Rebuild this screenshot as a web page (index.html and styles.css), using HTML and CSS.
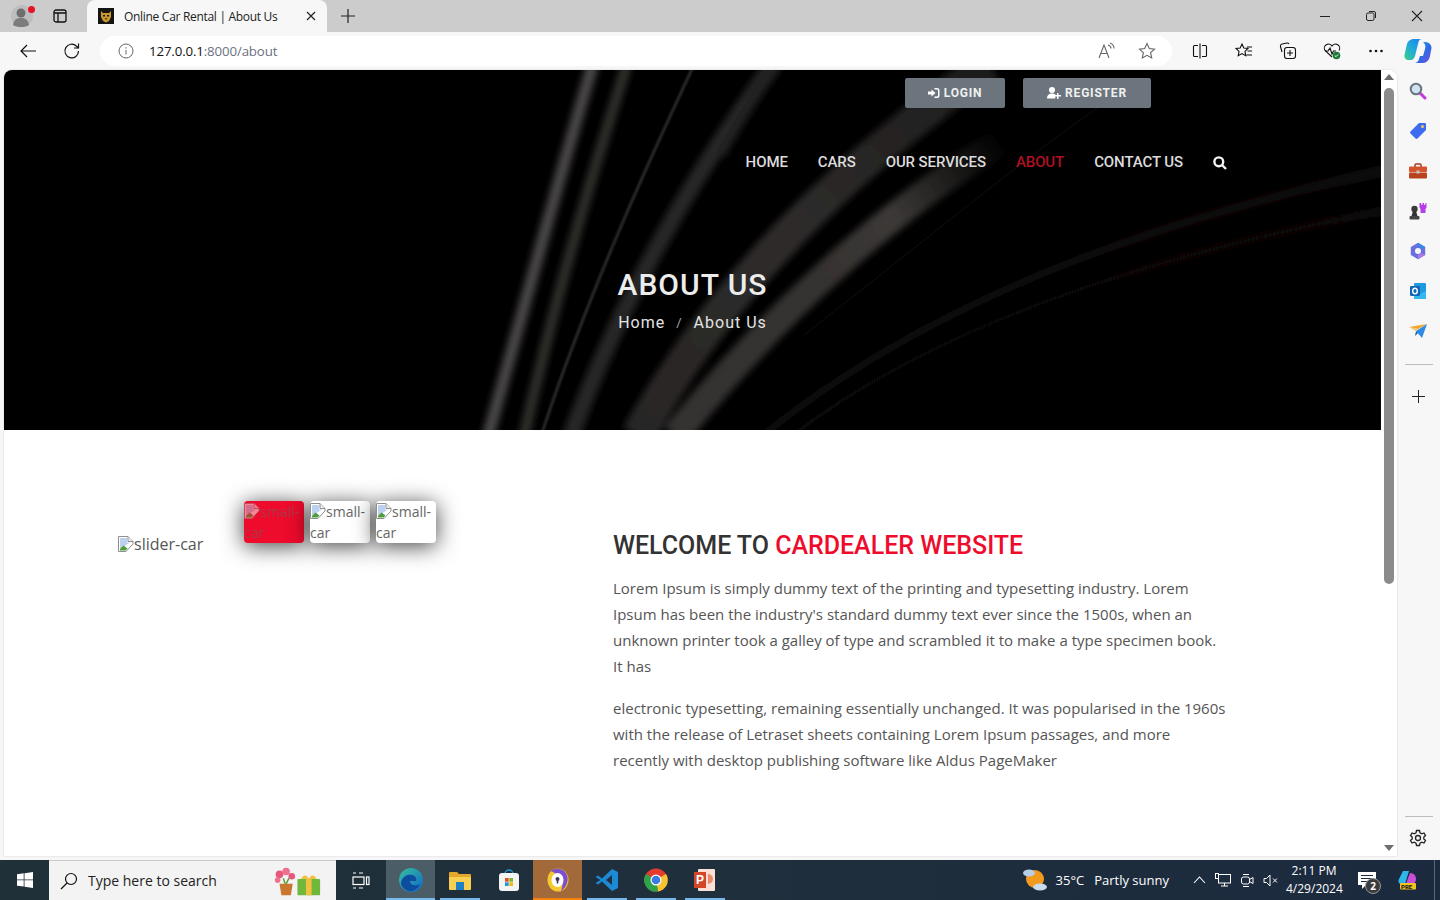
FILE: index.html
```html
<!DOCTYPE html>
<html lang="en">
<head>
<meta charset="utf-8">
<title>Online Car Rental | About Us</title>
<link rel="stylesheet" href="styles.css">
</head>
<body>
<div class="tabstrip">
  <div class="avatar">
    <svg width="24" height="24" viewBox="0 0 24 24"><circle cx="12" cy="12" r="11" fill="#bdbdbd"/><circle cx="11" cy="9" r="4.5" fill="#6e6e6e"/><path d="M3 21c1-6 4-7 8-7s7 1 8 7c-2 1.500-5 2-8 2s-6-.5-8-2z" fill="#7c7c7c"/></svg>
    <span class="dot"></span>
  </div>
  <div class="tabs-btn"><svg width="16" height="16" viewBox="0 0 16 16" fill="none" stroke="#111" stroke-width="1.300"><rect x="2" y="2" width="12" height="12" rx="2"/><path d="M6 5v9M2 5h12" /></svg></div>
  <div class="tab">
    <svg class="favicon" width="16" height="16" viewBox="0 0 16 16"><rect width="16" height="16" fill="#141414"/><path d="M3 3l2 2h6l2-2v6l-2 4-3 1.500L5 13 3 9z" fill="#c9982c"/><path d="M5 7h2v1.500H5zM9 7h2v1.500H9zM7 10h2l-1 2z" fill="#1a1a1a"/></svg>
    <span class="tab-title">Online Car Rental | About Us</span>
    <svg class="tab-close" width="10" height="10" viewBox="0 0 10 10" stroke="#222" stroke-width="1.200"><path d="M1 1l8 8M9 1l-8 8"/></svg>
  </div>
  <div class="newtab"><svg width="16" height="16" viewBox="0 0 16 16" stroke="#222" stroke-width="1.200"><path d="M8 1v14M1 8h14"/></svg></div>
  <div class="winctrls">
    <div class="winbtn"><svg width="12" height="12" viewBox="0 0 12 12" stroke="#222"><path d="M1 6.500h10"/></svg></div>
    <div class="winbtn"><svg width="12" height="12" viewBox="0 0 12 12" fill="none" stroke="#222"><rect x="1.500" y="3" width="7.500" height="7.500" rx="1.500"/><path d="M4 1.500h5A1.500 1.500 0 0 1 10.500 3v5"/></svg></div>
    <div class="winbtn"><svg width="12" height="12" viewBox="0 0 12 12" stroke="#222" stroke-width="1.100"><path d="M1 1l10 10M11 1L1 11"/></svg></div>
  </div>
</div>

<div class="toolbar">
  <div class="tbtn"><svg width="18" height="16" viewBox="0 0 18 16" fill="none" stroke="#111" stroke-width="1.200"><path d="M17 8H2M8 2L2 8l6 6"/></svg></div>
  <div class="tbtn"><svg width="18" height="18" viewBox="0 0 18 18" fill="none" stroke="#111" stroke-width="1.200"><path d="M15.500 9a6.800 6.800 0 1 1-2-4.800L15.500 6"/><path d="M15.500 1.500V6H11"/></svg></div>
  <div class="address">
    <svg class="info" width="16" height="16" viewBox="0 0 16 16" fill="none" stroke="#666"><circle cx="8" cy="8" r="7"/><path d="M8 7v4.500M8 4.200v1.400"/></svg>
    <span class="url"><span class="host">127.0.0.1</span>:8000/about</span>
    <svg class="read" width="18" height="18" viewBox="0 0 18 18" fill="none" stroke="#666" stroke-width="1.100"><path d="M1 16L6 3l5 13M3 11.500h6"/><path d="M10 3c2 .5 3 2 3 3.500M12 1c3 1 4 3 4 5.500"/></svg>
    <svg class="fav" width="18" height="18" viewBox="0 0 18 18" fill="none" stroke="#666" stroke-width="1.100"><path d="M9 1.500l2.300 5 5.200.6-3.900 3.600 1.100 5.300L9 13.300 4.300 16l1.100-5.300L1.500 7.100l5.200-.6z"/></svg>
  </div>
  <div class="tools">
    <div class="tbtn"><svg width="16" height="16" viewBox="0 0 16 16" fill="none" stroke="#111" stroke-width="1.100"><path d="M6 2.500H2.500a1 1 0 0 0-1 1v9a1 1 0 0 0 1 1H6M10 2.500h3.500a1 1 0 0 1 1 1v9a1 1 0 0 1-1 1H10M8 .5v15"/></svg></div>
    <div class="tbtn"><svg width="18" height="18" viewBox="0 0 18 18" fill="none" stroke="#111" stroke-width="1.100"><path d="M7 2l1.800 4 4.200.5-3 2.900.8 4.300L7 11.600l-3.800 2.100.8-4.300-3-2.900L5.200 6zM12 5h5M12.500 9h4.500M11.500 13h5.500"/></svg></div>
    <div class="tbtn"><svg width="18" height="18" viewBox="0 0 18 18" fill="none" stroke="#111" stroke-width="1.100"><path d="M3 10L1.500 4.500a2 2 0 0 1 1.500-2.500l5-1a2 2 0 0 1 2 1"/><rect x="5.500" y="5.500" width="11" height="11" rx="2.500"/><path d="M11 8v6M8 11h6"/></svg></div>
    <div class="tbtn"><svg width="18" height="18" viewBox="0 0 18 18"><path d="M9 15L2 8.500A4 4 0 0 1 9 4a4 4 0 0 1 7 4.500" fill="none" stroke="#111" stroke-width="1.100"/><path d="M2 9h3l2-3 2 6 1.500-3H13" fill="none" stroke="#111" stroke-width="1.100"/><circle cx="13.500" cy="13.500" r="3.800" fill="#1c7a35"/><path d="M11.800 13.500l1.200 1.200 2.200-2.200" fill="none" stroke="#fff"/></svg></div>
    <div class="tbtn"><svg width="16" height="4" viewBox="0 0 16 4" fill="#111"><circle cx="2.500" cy="2" r="1.300"/><circle cx="8" cy="2" r="1.300"/><circle cx="13.500" cy="2" r="1.300"/></svg></div>
    <div class="tbtn copilot"><svg width="28" height="26" viewBox="0 0 28 26"><defs><linearGradient id="cpa" x1="0" y1="1" x2="1" y2="0"><stop offset="0" stop-color="#35d08a"/><stop offset=".55" stop-color="#1fa5e0"/><stop offset="1" stop-color="#1f7fe8"/></linearGradient><linearGradient id="cpb" x1="0" y1="0" x2="1" y2="1"><stop offset="0" stop-color="#27b4ec"/><stop offset=".55" stop-color="#2b6be4"/><stop offset="1" stop-color="#7a4be0"/></linearGradient></defs><path d="M10 1h8c-2 0-3 1-3.500 3L11 18c-.6 2-2 4-4 4H5c-3 0-5-2-4.500-5l2-9C3.500 3 6 1 10 1z" fill="url(#cpa)"/><path d="M18 4h3c3 0 6.500 2 6.500 6l-1.500 8c-.7 4-3.500 7-7 7h-9c3 0 4.500-2 5-4l1-3h3l2-7c.5-2 1-4-2-7z" fill="url(#cpb)"/></svg></div>
  </div>
</div>

<div class="main">
  <div class="window">
    <div class="page">
      <section class="hero">
        <svg class="hero-art" viewBox="0 0 1377 360" preserveAspectRatio="none">
          <defs>
            <filter id="soft" x="-20%" y="-20%" width="140%" height="140%"><feGaussianBlur stdDeviation="3.500"/></filter>
            <filter id="softer" x="-20%" y="-20%" width="140%" height="140%"><feGaussianBlur stdDeviation="1"/></filter>
            <linearGradient id="fadeE" gradientUnits="userSpaceOnUse" x1="1000" y1="70" x2="800" y2="210"><stop offset="0" stop-color="#3c3837" stop-opacity="0"/><stop offset=".55" stop-color="#3c3837"/><stop offset="1" stop-color="#353130"/></linearGradient>
            <linearGradient id="fadeF" gradientUnits="userSpaceOnUse" x1="1377" y1="100" x2="760" y2="360"><stop offset="0" stop-color="#151212"/><stop offset=".6" stop-color="#100e0e"/><stop offset="1" stop-color="#0b0a0a"/></linearGradient>
            <linearGradient id="fadeD" gradientUnits="userSpaceOnUse" x1="979" y1="0" x2="636" y2="360"><stop offset="0" stop-color="#1e1c1c"/><stop offset=".5" stop-color="#2e2c2b"/><stop offset="1" stop-color="#282625"/></linearGradient>
          </defs>
          <g fill="none" filter="url(#soft)">
            <path d="M589 -6C560 90 525 220 484 366" stroke="#4a4746" stroke-width="12"/>
            <path d="M623 -6C596 80 555 210 520 366" stroke="#2f2d2c" stroke-width="11"/>
            <path d="M770 -6C700 90 620 220 567 366" stroke="#282625" stroke-width="17"/>
            <path d="M985 -6C880 70 730 190 634 366" stroke="url(#fadeD)" stroke-width="34"/>
            <path d="M1000 70C900 130 780 230 671 366" stroke="url(#fadeE)" stroke-width="28"/>
            <path d="M773 -6C745 35 730 60 716 85" stroke="#242322" stroke-width="10"/>
            <path d="M1383 100C1200 140 950 210 758 366" stroke="url(#fadeF)" stroke-width="7"/>
            <path d="M1383 140C1200 175 950 240 788 366" stroke="url(#fadeF)" stroke-width="5"/>
          </g>
          <path d="M689 -3C650 80 585 220 537 366" fill="none" stroke="#343130" stroke-width="2.500" filter="url(#softer)"/>
          <path d="M1133 13C1060 55 960 140 800 265" fill="none" stroke="#100f0f" stroke-width="1"/>
        </svg>
        <div class="auth">
          <a class="btn login"><svg width="12" height="12" viewBox="0 0 12 12" fill="#fff"><path d="M0 4.500h3.500V2.500L7.500 6l-4 3.500v-2H0z"/><path d="M6.500 1H9a2.500 2.500 0 0 1 2.500 2.500v5A2.500 2.500 0 0 1 9 11H6.500V9.500H9a1 1 0 0 0 1-1v-5a1 1 0 0 0-1-1H6.500z"/></svg>LOGIN</a>
          <a class="btn register"><svg width="14" height="12" viewBox="0 0 14 12" fill="#fff"><circle cx="5" cy="3" r="3"/><path d="M0 11.500C0 8 2 6.500 5 6.500c1.500 0 2.500.3 3.300 1v4H0z"/><path d="M10 6h1.500v2H14v1.500h-2.500V12H10V9.500H7.800V8H10z"/></svg>REGISTER</a>
        </div>
        <nav class="nav">
          <a class="nav-link">HOME</a>
          <a class="nav-link">CARS</a>
          <a class="nav-link">OUR SERVICES</a>
          <a class="nav-link active">ABOUT</a>
          <a class="nav-link">CONTACT US</a>
          <svg class="nav-search" width="14" height="14" viewBox="0 0 14 14" fill="none" stroke="#f4f4f4" stroke-width="2.400"><circle cx="5.800" cy="5.800" r="4.400"/><path d="M9 9l4 4"/></svg>
        </nav>
        <div class="hero-title">
          <h1>ABOUT US</h1>
          <p class="crumbs"><span>Home</span><span class="sep">/</span><span>About Us</span></p>
        </div>
      </section>

      <section class="about">
        <div class="gallery">
          <div class="thumbs">
            <div class="thumb selected">
              <span class="thumb-alt"><svg class="broken" width="16" height="16" viewBox="0 0 16 16"><use href="#brk"/></svg>small-car</span>
            </div>
            <div class="thumb">
              <span class="thumb-alt"><svg class="broken" width="16" height="16" viewBox="0 0 16 16"><use href="#brk"/></svg>small-car</span>
            </div>
            <div class="thumb">
              <span class="thumb-alt"><svg class="broken" width="16" height="16" viewBox="0 0 16 16"><use href="#brk"/></svg>small-car</span>
            </div>
          </div>
          <div class="slider-alt">
            <svg class="broken" width="16" height="16" viewBox="0 0 16 16"><g id="brk"><path d="M.5.500H10L15 5.500V8L8 15.500H.5z" fill="#fff" stroke="#8f8f8f"/><path d="M10 .5v5h5" fill="#ececec" stroke="#8f8f8f"/><path d="M2 2h7v4.500h3L6.500 10 2 13z" fill="#bcd0f2"/><path d="M2 14.500V13l3.500-3.500 4 3-2 2z" fill="#4f9c3a"/></g></svg>slider-car
          </div>
        </div>
        <div class="copy">
          <h2>WELCOME TO <span class="accent">CARDEALER WEBSITE</span></h2>
          <p>Lorem Ipsum is simply dummy text of the printing and typesetting industry. Lorem Ipsum has been the industry's standard dummy text ever since the 1500s, when an unknown printer took a galley of type and scrambled it to make a type specimen book. It has</p>
          <p>electronic typesetting, remaining essentially unchanged. It was popularised in the 1960s with the release of Letraset sheets containing Lorem Ipsum passages, and more recently with desktop publishing software like Aldus PageMaker</p>
        </div>
      </section>
    </div>
    <div class="scrollbar">
      <svg class="arrow" width="10" height="6" viewBox="0 0 10 6" fill="#6e6e6e"><path d="M5 0l5 6H0z"/></svg>
      <div class="thumbbar"></div>
      <div class="track"></div>
      <svg class="arrow" width="10" height="6" viewBox="0 0 10 6" fill="#6e6e6e"><path d="M5 6L0 0h10z"/></svg>
    </div>
  </div>

  <aside class="sidebar">
    <div class="side-ico"><svg width="18" height="18" viewBox="0 0 18 18"><path d="M11 11l5 5" stroke="#c23ae0" stroke-width="3" stroke-linecap="round"/><circle cx="7" cy="7" r="5.300" fill="#cfe2f2" stroke="#6a747c" stroke-width="2"/></svg></div>
    <div class="side-ico"><svg width="18" height="18" viewBox="0 0 18 18"><path d="M10 1h6a1 1 0 0 1 1 1v6L8.500 16.500a1.500 1.500 0 0 1-2 0L1.500 11.500a1.500 1.500 0 0 1 0-2z" fill="#3d6cf0"/><circle cx="13.500" cy="4.500" r="1.500" fill="#f2c94c"/></svg></div>
    <div class="side-ico"><svg width="18" height="16" viewBox="0 0 18 16"><path d="M6 4V2a1 1 0 0 1 1-1h4a1 1 0 0 1 1 1v2" fill="none" stroke="#a33a1d" stroke-width="1.500"/><rect y="3.500" width="18" height="5.500" rx="1" fill="#d3532c"/><rect y="9.500" width="18" height="6" rx="1" fill="#b8431f"/><rect x="7.500" y="7.500" width="3" height="3" fill="#c9c4c0"/></svg></div>
    <div class="side-ico"><svg width="18" height="18" viewBox="0 0 18 18"><path d="M10.500 1h1.700v1.800h1.400V1h1.400v1.800h1.400V1h1.100v4.500l-1 1.500V11h-5V7l-1-1.500z" fill="#b53ee8"/><circle cx="5.500" cy="7" r="3.200" fill="#3b3b3b"/><path d="M4 9h3l1.500 5h-6z" fill="#333"/><rect x=".5" y="14" width="10" height="3.500" rx="1" fill="#444"/></svg></div>
    <div class="side-ico"><svg width="18" height="18" viewBox="0 0 18 18"><path d="M9 .8l7.200 4.200v8L9 17.200 1.800 13V5z" fill="#6a6fe0"/><path d="M9 .8l7.200 4.200-3.500 2L9 5z" fill="#3a86e8"/><path d="M16.200 13L9 17.200V13l3.700-2z" fill="#b07ae0"/><circle cx="9" cy="9" r="3" fill="#f7f7f7"/></svg></div>
    <div class="side-ico"><svg width="18" height="18" viewBox="0 0 18 18"><rect x="5" y="1" width="12" height="16" rx="1" fill="#1f9ae0"/><path d="M5 9l6 3 6-3v8H5z" fill="#35b8f0"/><rect x="1" y="4" width="10" height="10" rx="1.200" fill="#0f65b8"/><ellipse cx="6" cy="9" rx="2.300" ry="2.800" fill="none" stroke="#fff" stroke-width="1.400"/></svg></div>
    <div class="side-ico"><svg width="18" height="14" viewBox="0 0 18 14"><path d="M0 3l18-3-9 5z" fill="#f2a62c"/><path d="M18 0L7 7l6 7z" fill="#2e8ae6"/><path d="M7 7l-1 5 3-3z" fill="#1c5fb0"/><path d="M0 3l7 4 2-2z" fill="#f7c65c"/></svg></div>
    <div class="side-rule"></div>
    <div class="side-ico plus"><svg width="13" height="13" viewBox="0 0 13 13" stroke="#222"><path d="M6.500 0v13M0 6.500h13"/></svg></div>
    <div class="side-fill"></div>
    <div class="side-rule"></div>
    <div class="side-ico gear"><svg width="18" height="18" viewBox="0 0 18 18" fill="none" stroke="#222" stroke-width="1.300"><circle cx="9" cy="9" r="2.500"/><path d="M7.500 1.500h3l.5 2.300 1.800 1 2.200-.8 1.500 2.600L14.800 8v2l1.700 1.400-1.500 2.600-2.200-.8-1.800 1-.5 2.300h-3L7 14.200l-1.800-1-2.200.8-1.500-2.600L3.200 10V8L1.500 6.600 3 4l2.200.8 1.800-1z"/></svg></div>
  </aside>
</div>

<footer class="taskbar">
  <div class="start"><svg width="16" height="16" viewBox="0 0 16 16" fill="#fff"><path d="M0 2.200L6.700 1.300v6.200H0zM7.500 1.200L16 0v7.500H7.500zM0 8.300h6.700v6.300L0 13.700zM7.500 8.300H16V16l-8.500-1.200z"/></svg></div>
  <div class="search">
    <svg width="18" height="18" viewBox="0 0 18 18" fill="none" stroke="#111" stroke-width="1.200"><circle cx="11" cy="7" r="5.500"/><path d="M7 11l-6 6"/></svg>
    <span class="search-text">Type here to search</span>
    <svg class="search-art" width="51" height="30" viewBox="0 0 54 30"><circle cx="9" cy="8" r="4" fill="#e8567c"/><circle cx="16" cy="5" r="4" fill="#f0708c"/><circle cx="22" cy="10" r="3.500" fill="#e8567c"/><circle cx="7" cy="14" r="3" fill="#f0708c"/><path d="M13 12l2 6M19 12l-3 6" stroke="#5a9a3a" stroke-width="1.500"/><path d="M9 18h14l-2 12H11z" fill="#c9772e"/><rect x="28" y="13" width="24" height="17" rx="1" fill="#6fb83c"/><rect x="37" y="13" width="6" height="17" fill="#f0c040"/><path d="M32 13c2-6 7-4 8 0 1-4 6-6 8 0z" fill="#f0c040"/></svg>
  </div>
  <div class="task taskview"><svg width="18" height="17" viewBox="0 0 18 17" fill="none" stroke="#fff" stroke-width="1.200"><path d="M1 1h3M7 1h4M1 16h3M7 16h4"/><rect x="1" y="5" width="11" height="7.500"/><rect x="14.500" y="5" width="2.500" height="7.500"/></svg></div>
  <div class="task lit"><svg width="26" height="26" viewBox="0 0 26 26"><defs><linearGradient id="edg" x1="0" y1="0" x2="1" y2="1"><stop offset="0" stop-color="#35c1a0"/><stop offset="1" stop-color="#1266c8"/></linearGradient></defs><circle cx="13" cy="13" r="12" fill="url(#edg)"/><path d="M3 16C4 9 10 7 14 8c4 1 5 4 4 6h-6c0 4 5 6 10 3-2 5-7 8-11 7-5-1-8-5-8-8z" fill="#0c4da0"/></svg></div>
  <div class="task on-blue"><svg width="24" height="21" viewBox="0 0 24 21"><path d="M1 3a1 1 0 0 1 1-1h7l2 2h11a1 1 0 0 1 1 1v3H1z" fill="#e3a72a"/><rect x="1" y="7" width="22" height="13" rx="1" fill="#f7cf52"/><rect x="8" y="12" width="8" height="8" fill="#1d7fc4"/></svg></div>
  <div class="task"><svg width="24" height="24" viewBox="0 0 24 24"><path d="M8 6a4 4 0 0 1 8 0" fill="none" stroke="#1d9bd8" stroke-width="1.500"/><rect x="2" y="5" width="20" height="18" rx="3" fill="#f4f4f4"/><rect x="8" y="10" width="3.700" height="3.700" fill="#e8502a"/><rect x="12.300" y="10" width="3.700" height="3.700" fill="#7fba2a"/><rect x="8" y="14.300" width="3.700" height="3.700" fill="#1d9bd8"/><rect x="12.300" y="14.300" width="3.700" height="3.700" fill="#f5b81c"/></svg></div>
  <div class="task orange"><svg width="22" height="24" viewBox="0 0 22 24"><ellipse cx="11" cy="12" rx="10.500" ry="11.500" fill="#f5c832"/><path d="M4 3c5-4 13-3 16 4 2 6-1 13-6 16 3-7 2-14-10-20z" fill="#7c4fd0"/><ellipse cx="10.500" cy="12" rx="6" ry="7" fill="#fff"/><circle cx="10.500" cy="11" r="2" fill="#3d3560"/><rect x="9.700" y="12" width="1.600" height="3.500" fill="#3d3560"/></svg></div>
  <div class="task on-blue"><svg width="24" height="24" viewBox="0 0 24 24"><path d="M17 1l6 3v16l-6 3L7 13.500l-4 3-2.500-1.500 5-3-5-3L3 7.500l4 3zM17 7l-6 5 6 5z" fill="#1d8ad6"/></svg></div>
  <div class="task on-blue"><svg width="24" height="24" viewBox="0 0 24 24"><circle cx="12" cy="12" r="11.500" fill="#e33b2e"/><path d="M12 12L22 6a11.500 11.500 0 0 1-8 17.500z" fill="#f6c433"/><path d="M12 12L14 23.500A11.500 11.500 0 0 1 2 6z" fill="#2fa24a"/><circle cx="12" cy="12" r="5.500" fill="#fff"/><circle cx="12" cy="12" r="4.300" fill="#3a7de0"/></svg></div>
  <div class="task on-blue"><svg width="22" height="24" viewBox="0 0 22 24"><rect x="4" y="1" width="17" height="22" rx="1" fill="#fbe0d6"/><rect width="12" height="16" y="4" fill="#d2472a"/><path d="M14 6a5 5 0 1 1 0 10z" fill="#f08a6a"/><text class="ppt-letter" x="2" y="16">P</text></svg></div>

  <div class="tray">
    <div class="weather">
      <svg width="26" height="24" viewBox="0 0 26 24"><circle cx="13" cy="11" r="9" fill="#f09a1e"/><ellipse cx="7" cy="5" rx="6" ry="3.500" fill="#b7cfe6"/><ellipse cx="18" cy="19" rx="7" ry="3.500" fill="#c9dcee"/></svg>
      <span class="temp">35°C</span>
      <span class="cond">Partly sunny</span>
    </div>
    <svg class="tray-ico chev" width="13" height="8" viewBox="0 0 13 8" fill="none" stroke="#fff" stroke-width="1.100"><path d="M1 7l5.500-6L12 7"/></svg>
    <svg class="tray-ico net" width="16" height="14" viewBox="0 0 16 14" fill="none" stroke="#fff"><rect x="3.500" y="1.500" width="12" height="8.500"/><rect x=".5" y=".5" width="3" height="5" fill="#1b2a3d"/><path d="M6 13h7M9.500 10v3"/></svg>
    <svg class="tray-ico cam" width="14" height="15" viewBox="0 0 14 15" fill="none" stroke="#fff"><rect x="1.500" y="4" width="8" height="7" rx="2"/><path d="M9.500 6.500l3.500-2v6l-3.500-2M3 1.500h6M3 13.500h6"/></svg>
    <svg class="tray-ico vol" width="15" height="13" viewBox="0 0 15 13" fill="none" stroke="#fff"><path d="M1 4.500h2.500L7 1v11L3.500 8.500H1zM10 4.500l4 4M14 4.500l-4 4"/></svg>
    <div class="clock"><div>2:11 PM</div><div>4/29/2024</div></div>
    <div class="notif">
      <svg width="18" height="17" viewBox="0 0 18 17"><path d="M0 0h18v13H8l-4 4v-4H0z" fill="#fff"/><path d="M3 3.500h12M3 6.500h12M3 9.500h8" stroke="#1b2a3d"/></svg>
      <span class="badge">2</span>
    </div>
    <div class="copilot-pre"><svg width="20" height="20" viewBox="0 0 20 20"><path d="M5 1h6L7 14H3C1 14 0 12 .5 10z" fill="#2fb6e8"/><path d="M12 3c3 0 6 2 6 6s-3 5-5 5H8l2-6z" fill="#c94fd8"/><rect x="2" y="13" width="16" height="6.500" rx="1" fill="#f2c21f"/></svg><span class="pre">PRE</span></div>
    <div class="desk"></div>
  </div>
</footer>
</body>
</html>
```

FILE: styles.css
```css
* { box-sizing: border-box; }
html, body { margin: 0; padding: 0; height: 900px; overflow: hidden; }
body { width: 1440px; display: flex; flex-direction: column; background: #f7f7f7; font-family: "Open Sans", "Noto Sans", sans-serif; }
svg { display: block; flex: none; }

/* tab strip */
.tabstrip { height: 32px; background: #cccccc; display: flex; align-items: center; flex: none; }
.avatar { margin-left: 10px; width: 24px; height: 24px; position: relative; }
.dot { position: absolute; top: 2px; right: -1px; width: 7px; height: 7px; border-radius: 50%; background: #e81123; }
.tabs-btn { margin-left: 18px; width: 16px; }
.tab { margin-left: 19px; width: 240px; height: 32px; background: #f7f7f7; border-radius: 8px 8px 0 0; display: flex; align-items: center; padding: 0 11px; }
.tab-title { margin-left: 10px; font-size: 12px; letter-spacing: -.3px; color: #222; white-space: nowrap; flex: 1; }
.newtab { margin-left: 13px; width: 16px; }
.winctrls { margin-left: auto; display: flex; }
.winbtn { width: 46px; display: flex; justify-content: center; }

/* toolbar */
.toolbar { height: 38px; flex: none; display: flex; align-items: center; padding-left: 6px; background: #f7f7f7; }
.tbtn { width: 44px; height: 30px; display: flex; align-items: center; justify-content: center; flex: none; }
.copilot { width: 40px; }
.address { margin-left: 6px; width: 1072px; height: 30px; background: #fff; border-radius: 15px; display: flex; align-items: center; padding: 0 16px 0 18px; }
.url { margin-left: 15px; font-size: 13.3px; letter-spacing: -.15px; color: #6b7280; flex: 1; }
.host { color: #111; }
.read { margin-right: 22px; }
.tools { margin-left: 6px; display: flex; }

/* main */
.main { flex: 1; display: flex; min-height: 0; }
.window { margin-left: 4px; width: 1393px; height: 786px; display: flex; background: #fff; border-radius: 8px 8px 0 0; overflow: hidden; box-shadow: 0 0 2px rgba(0,0,0,.18); }
.page { width: 1377px; flex: none; background: #fff; }

.hero { height: 360px; background: #000; position: relative; overflow: hidden; display: flex; flex-direction: column; font-family: Roboto, sans-serif; }
.hero-art { position: absolute; inset: 0; width: 100%; height: 100%; }
.auth, .nav, .hero-title { position: relative; }
.auth { display: flex; justify-content: flex-end; gap: 18px; padding: 8px 230px 0 0; }
.btn { height: 30px; background: #6c757d; border-radius: 2px; color: #f0f0f0; display: flex; align-items: center; justify-content: center; gap: 4px; font-size: 12px; font-weight: 700; letter-spacing: .8px; }
.login { width: 100px; }
.register { width: 128px; }
.nav { display: flex; justify-content: flex-end; align-items: center; gap: 30px; padding: 46px 154px 0 0; box-sizing: content-box; height: 17px; }
.nav-link { font-size: 15px; font-weight: 500; letter-spacing: -.1px; color: #dcdcdc; white-space: nowrap; line-height: 17px; }
.active { color: #b00f23; }
.hero-title { margin-top: 96px; text-align: center; }
.hero-title h1 { margin: 0; font-size: 30px; line-height: 36px; font-weight: 500; color: #ececec; letter-spacing: 1px; }
.crumbs { margin: 10px 0 0; font-size: 16px; line-height: 20px; font-weight: 400; color: #e4e4e4; letter-spacing: 1px; display: flex; justify-content: center; gap: 11px; }
.sep { color: #aaa; font-size: 13px; }

/* about */
.about { display: flex; padding: 71px 0 0 114px; }
.gallery { width: 495px; flex: none; display: flex; flex-direction: column; font-size: 16px; color: #5f5f5f; }
.thumbs { display: flex; gap: 6px; margin-left: 126px; }
.thumb { width: 60px; height: 42px; border-radius: 4px; background: #fff; font-size: 14px; line-height: 21px; overflow: hidden; box-shadow: 0 3px 22px rgba(0,0,0,.75); color: #666; }
.thumb-alt { display: block; }
.selected { background: #ee0b2c; }
.selected .thumb-alt { opacity: .5; }
.broken { display: inline-block; vertical-align: -2px; }
.slider-alt { margin-top: -10px; line-height: 22px; color: #555; }
.copy { width: 616px; flex: none; padding-top: 30px; color: #555; font-size: 15px; line-height: 26px; }
.copy h2 { margin: 0 0 14px; font-family: Roboto, sans-serif; font-size: 25px; line-height: 30px; font-weight: 500; color: #333; letter-spacing: -.02px; }
.accent { color: #ee0b2c; }
.copy p { margin: 0 0 16px; }

/* scrollbar */
.scrollbar { width: 16px; flex: none; background: #fff; display: flex; flex-direction: column; align-items: center; padding: 4px 0 5px; }
.arrow { flex: none; }
.thumbbar { width: 10px; height: 496px; margin-top: 8px; background: #8b8b8b; border-radius: 5px; flex: none; }
.track { flex: 1; }

/* sidebar */
.sidebar { width: 43px; flex: none; display: flex; flex-direction: column; align-items: center; padding-top: 1px; height: 790px; }
.side-ico { height: 40px; width: 100%; display: flex; align-items: center; justify-content: center; flex: none; padding-right: 1px; }
.side-rule { width: 28px; height: 1px; background: #bdbdbd; margin-top: 13px; flex: none; }
.side-ico.plus { margin-top: 11px; }
.side-fill { flex: 1; }
.side-ico.gear { margin: 1px 0 2px; }

/* taskbar */
.taskbar { height: 40px; flex: none; display: flex; align-items: center; background: linear-gradient(90deg, #1f3039 0%, #1f2f3c 50%, #1b2a3e 100%); color: #fff; }
.start { width: 49px; height: 40px; display: flex; align-items: center; justify-content: center; }
.search { width: 287px; height: 40px; background: #f3f3f3; border-top: 1px solid #c9c9c9; display: flex; align-items: center; padding: 0 14px 0 11px; color: #222; }
.search-text { margin-left: 10px; font-size: 14px; flex: 1; }
.task { width: 49px; height: 40px; display: flex; align-items: center; justify-content: center; }
.taskview { width: 50px; padding-right: 1px; }
.on-blue { background: linear-gradient(#76b9ed, #76b9ed) center bottom / 40px 2px no-repeat; }
.lit { background: linear-gradient(#76b9ed, #76b9ed) center bottom / 100% 2px no-repeat, #4b5e68; }
.orange { background: linear-gradient(#f7810f, #f7810f) center bottom / 100% 2px no-repeat, #a2693a; }
.ppt-letter { font-family: "Liberation Sans", sans-serif; font-size: 12px; font-weight: 700; fill: #fff; }
.tray { margin-left: auto; display: flex; align-items: center; height: 40px; font-size: 13px; }
.weather { display: flex; align-items: center; }
.temp { margin-left: 8px; }
.cond { margin-left: 10px; margin-right: 24px; }
.tray-ico { flex: none; }
.chev { margin-right: 9px; }
.net { margin-right: 9px; }
.cam { margin-right: 9px; }
.clock { margin-left: 8px; width: 56px; text-align: center; font-size: 12px; line-height: 18px; }
.notif { margin-left: 16px; position: relative; width: 18px; }
.badge { position: absolute; left: 7px; top: 6px; width: 16px; height: 16px; border-radius: 50%; background: #3b3b3b; border: 1px solid #999; font-size: 10px; line-height: 14px; text-align: center; font-weight: 700; }
.copilot-pre { margin-left: 22px; position: relative; width: 20px; }
.pre { position: absolute; left: 3px; top: 13px; font-family: Roboto, sans-serif; font-size: 6px; line-height: 7px; font-weight: 900; color: #222; }
.desk { margin-left: 16px; width: 1px; height: 40px; background: #5c6776; margin-right: 5px; }
```
